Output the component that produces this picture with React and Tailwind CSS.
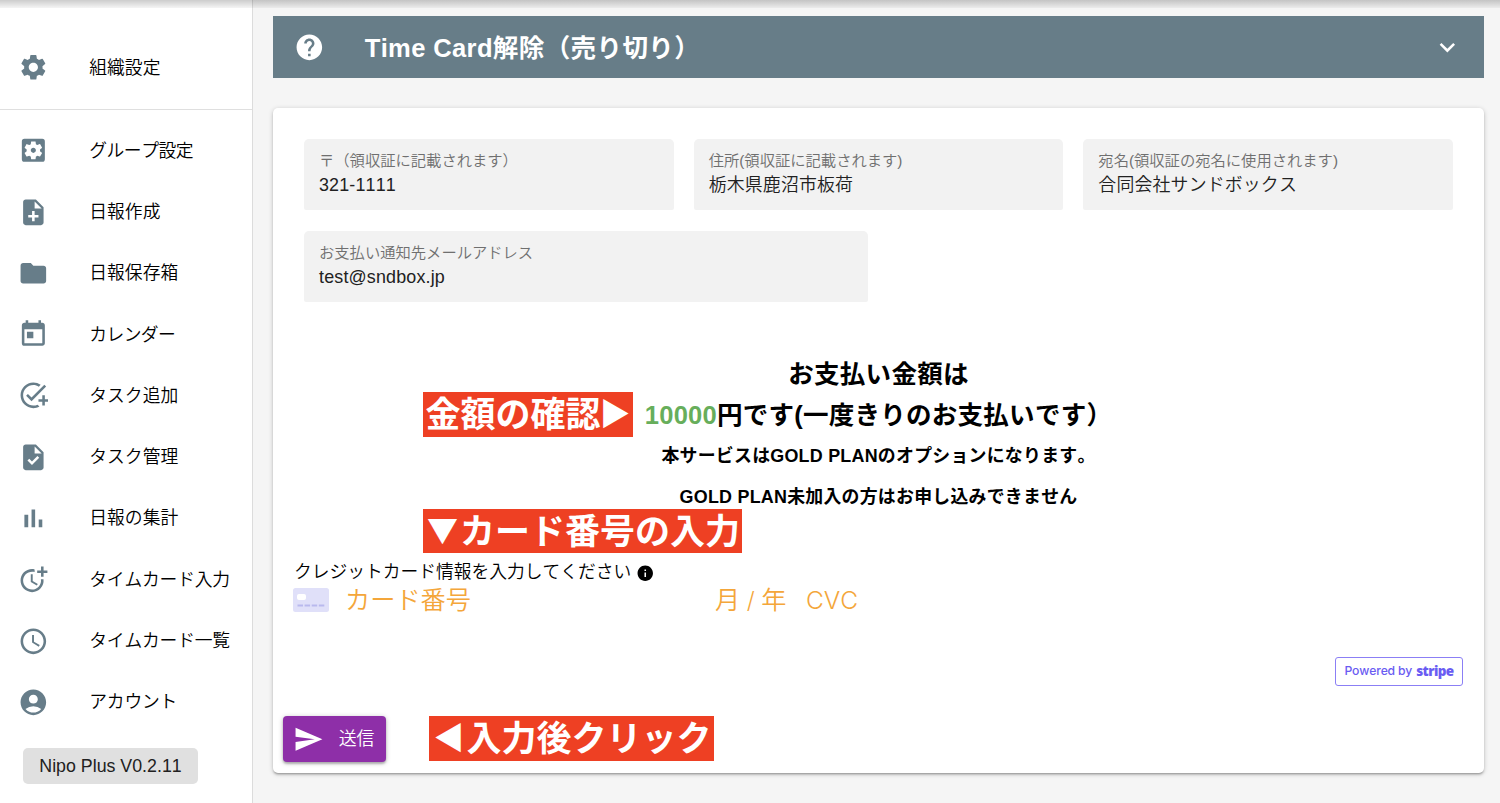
import React from "react";
import {
  MdSettings,
  MdSettingsApplications,
  MdNoteAdd,
  MdFolder,
  MdToday,
  MdAddTask,
  MdTask,
  MdMoreTime,
  MdSchedule,
  MdAccountCircle,
  MdSend,
  MdHelp,
  MdKeyboardArrowDown,
  MdInfo,
} from "react-icons/md";

function BarsIcon({ className }) {
  return (
    <svg viewBox="0 0 24 24" fill="currentColor" className={className}>
      <path d="M5 9.2h3V19H5zM10.6 5h2.8v14h-2.8zm5.6 8H19v6h-2.8z" />
    </svg>
  );
}

const menu = [
  { icon: MdSettingsApplications, label: "グループ設定", spacing: "tracking-[-0.5px]" },
  { icon: MdNoteAdd, label: "日報作成" },
  { icon: MdFolder, label: "日報保存箱" },
  { icon: MdToday, label: "カレンダー", spacing: "tracking-[-0.6px]" },
  { icon: MdAddTask, label: "タスク追加" },
  { icon: MdTask, label: "タスク管理" },
  { icon: BarsIcon, label: "日報の集計" },
  { icon: MdMoreTime, label: "タイムカード入力", spacing: "tracking-[-0.2px]" },
  { icon: MdSchedule, label: "タイムカード一覧", spacing: "tracking-[-0.2px]" },
  { icon: MdAccountCircle, label: "アカウント", spacing: "tracking-[-0.2px]" },
];

function MenuItem({ icon: Icon, label, spacing = "" }) {
  return (
    <li className="flex h-[61.3px] items-center pl-[17.6px]">
      <Icon className="size-[30.7px] shrink-0 text-[#677d89]" />
      <span className={`ml-[41px] text-[17.8px] leading-6 whitespace-nowrap ${spacing}`}>{label}</span>
    </li>
  );
}

function Field({ label, value, className = "" }) {
  return (
    <div className={`h-[71px] rounded-t-[5px] rounded-b-[2px] bg-[#f2f2f2] px-[15px] pt-[11px] ${className}`}>
      <div className="text-[15.3px] leading-[22px] whitespace-nowrap text-[#6f6f6f]">{label}</div>
      <div className="mt-px text-[17.9px] leading-6 tracking-[0.17px] text-[#212121]">{value}</div>
    </div>
  );
}

function Callout({ className, children }) {
  return (
    <div
      className={`absolute flex items-center justify-center bg-[#ee4023] pb-[6px] font-['Noto_Sans_CJK_JP',sans-serif] text-[35px] leading-none font-bold whitespace-nowrap text-white ${className}`}
    >
      {children}
    </div>
  );
}

function Arrow({ className = "", children }) {
  return <span className={`w-[35px] text-center text-[31px] ${className}`}>{children}</span>;
}

function CardGlyph() {
  return (
    <svg viewBox="0 0 36 24" className="mb-[3px] h-6 w-9 shrink-0">
      <rect width="36" height="24" rx="2.5" fill="#e0e0f9" />
      <rect x="4" y="6" width="9" height="6" rx="2" fill="#fff" />
      <path d="M4.5 17.5h27" stroke="#b9b9ee" strokeWidth="2.2" strokeDasharray="5.5 1.6" />
    </svg>
  );
}

export default function App() {
  return (
    <div className="relative flex h-[803px] w-[1500px] overflow-hidden bg-[#f5f5f5] font-['Liberation_Sans','Noto_Sans_CJK_JP',sans-serif] font-[350] text-black [font-kerning:none]">
      <aside className="flex w-[253px] shrink-0 flex-col border-r border-[#dcdcdc] bg-white">
        <ul className="border-b border-[#dfdfdf] pt-[37px] pb-[10.7px]">
          <MenuItem icon={MdSettings} label="組織設定" />
        </ul>
        <ul className="pt-[10px]">
          {menu.map((item) => (
            <MenuItem key={item.label} {...item} />
          ))}
        </ul>
        <div className="mt-[15px] ml-[23px] flex h-9 w-[175px] items-center justify-center rounded-[5px] bg-[#e0e0e0] text-[17.8px] text-[#212121]">
          Nipo Plus V0.2.11
        </div>
      </aside>

      <main className="flex flex-1 flex-col pt-4 pr-4 pl-5">
        <header className="flex h-[62px] w-[1211px] items-center bg-[#677d88] text-white">
          <MdHelp className="ml-[21px] size-[30.7px]" />
          <h1 className="mt-[2px] ml-[40px] flex-1 text-[25.56px] font-bold tracking-[0.36px]">
            Time Card解除（売り切り）
          </h1>
          <MdKeyboardArrowDown className="mr-[21px] size-[30.7px]" />
        </header>

        <section className="relative mt-[30px] h-[665px] w-[1211px] rounded-[5px] bg-white pt-[31px] shadow-[0_1px_5px_rgba(0,0,0,0.2),0_2px_2px_rgba(0,0,0,0.14),0_2px_1px_-1px_rgba(0,0,0,0.12)]">
          <div className="mx-[31px] grid grid-cols-3 gap-x-5 gap-y-[21px]">
            <Field label="〒（領収証に記載されます）" value="321-1111" />
            <Field label="住所(領収証に記載されます)" value="栃木県鹿沼市板荷" />
            <Field label="宛名(領収証の宛名に使用されます)" value="合同会社サンドボックス" />
            <Field
              label="お支払い通知先メールアドレス"
              value="test@sndbox.jp"
              className="col-span-2 w-[564px]"
            />
          </div>

          <div className="mt-[52px] text-center font-bold">
            <p className="h-[41px] text-[25.56px] leading-[41px] tracking-[0.22px]">お支払い金額は</p>
            <p className="h-[41px] text-[25.56px] leading-[41px] tracking-[0.22px]">
              <span className="text-[#67ae5b]">10000</span>円です(一度きりのお支払いです）
            </p>
            <p className="h-[41px] text-[17.9px] leading-[41px] tracking-[0.25px]">
              本サービスはGOLD PLANのオプションになります。
            </p>
            <p className="h-[41px] text-[17.9px] leading-[41px] tracking-[0.25px]">
              GOLD PLAN未加入の方はお申し込みできません
            </p>
          </div>

          <div className="mt-[42px] ml-[21px] flex h-6 items-center text-[17.75px]">
            クレジットカード情報を入力してください
            <MdInfo className="mt-[2px] ml-[5px] size-[18.5px]" />
          </div>
          <div className="mt-px ml-[20px] flex h-8 items-center text-[25.2px] text-[#f4a63a]">
            <CardGlyph />
            <span className="ml-4 w-[370px]">カード番号</span>
            <span className="w-[91px] whitespace-nowrap">
              月<span className="font-['Inter',sans-serif] text-[23px] font-light"> / </span>年
            </span>
            <span className="-mt-[2px] font-['Inter',sans-serif] text-[24.5px] font-light">CVC</span>
          </div>

          <div className="mt-[40px] mr-[21px] ml-auto flex h-[29px] w-[128px] items-center justify-center gap-1 rounded-[3px] border border-[#8b7ff5] text-[#6a5cf2]">
            <span className="font-['Inter',sans-serif] text-[12.2px] font-medium tracking-[-0.2px]">Powered by</span>
            <span className="font-['Open_Sans',sans-serif] text-[13.5px] leading-none font-extrabold tracking-[-0.6px]">
              stripe
            </span>
          </div>

          <button className="mt-[30px] ml-[10px] flex h-[46px] w-[103px] items-center rounded-[4px] bg-[#8e2fa8] pl-[10px] text-[17.9px] text-white shadow-[0_1px_5px_rgba(0,0,0,0.25),0_2px_2px_rgba(0,0,0,0.2)]">
            <MdSend className="size-[30.7px]" />
            <span className="ml-[15px]">送信</span>
          </button>

          <Callout className="top-[284px] left-[150px] h-[45px] w-[210px] pl-[2px]">
            金額の確認<Arrow className="-ml-[3px]">▶</Arrow>
          </Callout>
          <Callout className="top-[401px] left-[150px] h-[44px] w-[319px]">
            <Arrow>▼</Arrow>カード番号の入力
          </Callout>
          <Callout className="top-[608px] left-[156px] h-[45px] w-[285px]">
            <Arrow>◀</Arrow>入力後クリック
          </Callout>
        </section>
      </main>

      <div className="pointer-events-none absolute inset-x-0 top-0 h-2 bg-linear-to-b from-black/20 to-black/4" />
    </div>
  );
}
